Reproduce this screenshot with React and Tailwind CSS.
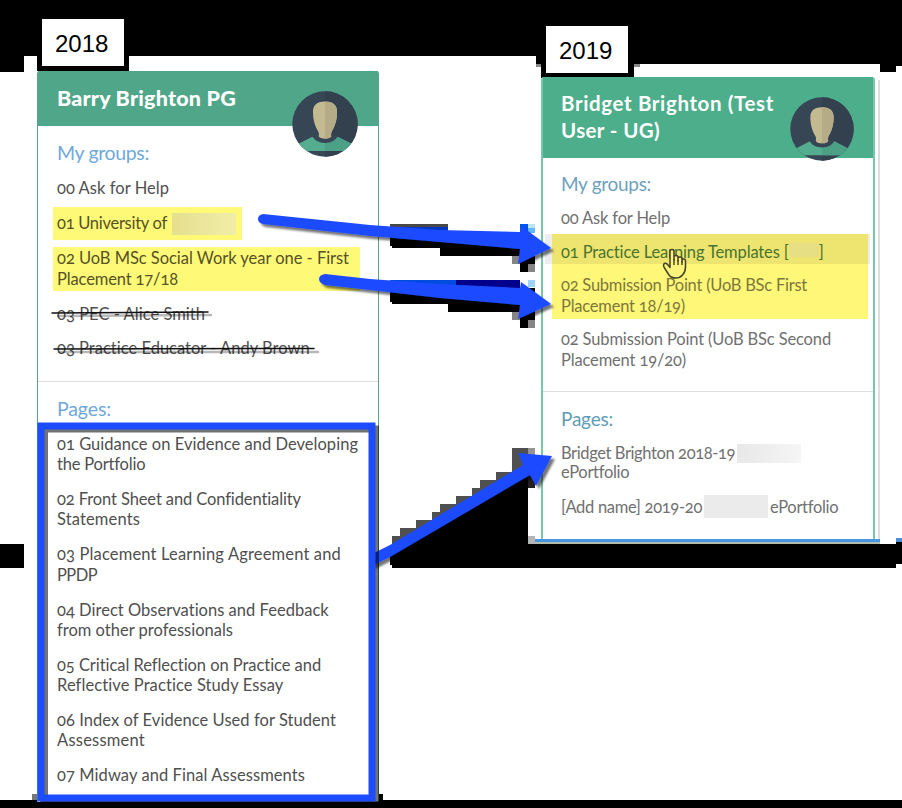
import { useLayoutEffect, useRef, useState } from "react";

/* One line of text, tracked so that it fills the given width. */
function Line({ children, w, className = "" }) {
  const ref = useRef(null);
  const [spacing, setSpacing] = useState(0);
  useLayoutEffect(() => {
    const natural = ref.current.getBoundingClientRect().width;
    setSpacing((w - natural) / String(children).length);
  }, []);
  return (
    <span className={`block whitespace-pre ${className}`}>
      <span ref={ref} style={{ letterSpacing: `${spacing}px` }}>
        {children}
      </span>
    </span>
  );
}

function YearLabel({ children, className = "" }) {
  return (
    <div
      className={`flex w-[92px] items-center border-[5px] border-black bg-white pl-[13px] pt-[3px] font-['Liberation_Sans',Arial,sans-serif] text-[24px] leading-none text-black ${className}`}
    >
      {children}
    </div>
  );
}

function Avatar({ id, className }) {
  return (
    <svg viewBox="0 0 66 66" className={className}>
      <clipPath id={id}>
        <circle cx="33" cy="33" r="32.7" />
      </clipPath>
      <g clipPath={`url(#${id})`}>
        <rect width="66" height="66" fill="#364655" />
        <rect x="33" width="33" height="66" fill="#33404e" />
        <path d="M2 60 L6 53 L20 46 H46 L60 53 L64 60 Z" fill="#55ad90" />
        <path d="M33 46 H46 L60 53 L64 60 H33Z" fill="#4ba085" />
        <path d="M20 45 Q24 52 33 52 Q42 52 46 45 Z" fill="#364655" />
        <path
          d="M33 10.500 C24 10.500 20.500 15 21 22 C21 30 24 37 26.500 41 Q27.500 44 26.500 45 Q28 47.800 33 47.800 Q38 47.800 39.500 45 Q38.500 44 39.500 41 C42 37 45 30 45 22 C45.500 15 42 10.500 33 10.500Z"
          fill="#c4ba92"
        />
        <path
          d="M33 10.500 V47.800 Q38 47.800 39.500 45 Q38.500 44 39.500 41 C42 37 45 30 45 22 C45.500 15 42 10.500 33 10.500Z"
          fill="#b5ab87"
        />
      </g>
    </svg>
  );
}

const pages2018 = [
  [["01 Guidance on Evidence and Developing", 301], ["the Portfolio", 88]],
  [["02 Front Sheet and Confidentiality", 244], ["Statements", 83]],
  [["03 Placement Learning Agreement and", 284], ["PPDP", 40]],
  [["04 Direct Observations and Feedback", 272], ["from other professionals", 176]],
  [["05 Critical Reflection on Practice and", 265], ["Reflective Practice Study Essay", 227]],
  [["06 Index of Evidence Used for Student", 279], ["Assessment", 88]],
  [["07 Midway and Final Assessments", 248]],
];

function Backdrop() {
  return (
    <svg className="absolute inset-0" width="902" height="808" shapeRendering="crispEdges">
      <path d="M0 0H902V66H896V72H880V64H634V78H542V64H536V56H24V72H0Z" />
      <path d="M536 64h5v3h-5zM634 64h6v3h-6z" fill="#888" />
      <path d="M0 544H24V568H0Z" />
      <path d="M32 794h8v14h-8z" fill="#777" />
      <path d="M0 800H902V808H0ZM375 794h8v8h-8z" />
      <path d="M390 553L528 474V544H896V542H902V564H896V568H392V565H390Z" />
      <path d="M896 538h6v4h-6z" fill="#4a8fd8" />
      <path d="M528 536h7v8h-7z" fill="#b5b5b5" />
      <path d="M878 80h2v463h-2z" fill="#ddd" />
    </svg>
  );
}

function Annotations() {
  return (
    <svg className="pointer-events-none absolute inset-0" width="902" height="808">
      <defs>
        <filter id="shade" x="-10%" y="-30%" width="120%" height="170%">
          <feDropShadow dx="3" dy="3" stdDeviation="1.2" floodColor="#000" floodOpacity="0.55" />
        </filter>
      </defs>
      <g shapeRendering="crispEdges">
        <path d="M535 538.500h345v3h-345z" fill="#4a95e0" />
        <path d="M535 541.500h345v2h-345z" fill="#b2bcae" />
        <path d="M390 224h58v3h-58z" fill="#484848" />
        <path d="M390 227h58v6h-58z" fill="#0037c0" />
        <path d="M448 232h72v6h-72z" fill="#0060ee" />
        <path d="M390 233H520V238H535V264H528V272H520V256H440V248H392V246H390Z" />
        <path d="M512 256h8v8h-8zM528 264h7v8h-7z" fill="#858585" />
        <path d="M520 224h8v8h-8z" fill="#0055ee" />
        <path d="M528 224h7v4h-7z" fill="#b9e3ff" />
        <path d="M528 228h7v5h-7z" fill="#62b7ff" />
        <path d="M390 280h66v8h-66z" fill="#004ce0" />
        <path d="M456 280h64v8h-64z" fill="#00008c" />
        <path d="M456 288h64v6h-64z" fill="#0060ee" />
        <path d="M390 290H520V288H535V320H528V328H520V312H448V304H392V302H390Z" />
        <path d="M512 312h8v8h-8zM528 320h7v8h-7z" fill="#858585" />
        <path d="M528 280h7v7h-7z" fill="#9bd4ff" />
        <path
          d="M392 545V536H400V528H416V520H432V512H440V504H456V496H472V488H480V480H496V472H512V448H528V475L392 553Z"
          fill="#505050"
        />
        <path d="M528 448h7v8h-7z" fill="#949494" />
        <path d="M528 470h7v18h-7z" fill="#252020" />
      </g>
      <g fill="#1d4cff" filter="url(#shade)">
        <path d="M263 214Q258 215 258 219Q258 223 263 224L370 236L440 242L520 249L518 264L551 248L521 226L520 232L440 230L370 225Z" />
        <path d="M325 274Q319 275 319 279Q319 283 325 285L370 290L440 298L520 305L518 319L551 304L521 282L520 288L440 284L370 279Z" />
        <path d="M372 554L390 545L523 465L518 453L552 456L536 486L530 475L390 557L372 566Z" />
      </g>
      <rect
        x="41"
        y="426"
        width="331"
        height="372"
        fill="none"
        stroke="#000"
        strokeOpacity="0.55"
        strokeWidth="7"
        transform="translate(3.5 3)"
      />
      <path d="M40 801.500h341v6.500h-341z" />
      <rect x="41" y="426" width="331" height="372" fill="none" stroke="#1d4cff" strokeWidth="7" />
      <g fill="none" strokeLinecap="round">
        <path d="M58 316L211 315M59 352L318 352" stroke="#000" strokeOpacity="0.28" strokeWidth="2.5" />
        <path d="M52 313L208 312M54 349L314 348.5" stroke="#111" strokeWidth="1.5" />
      </g>
      <path
        d="M670 264V251.500Q670 249.500 672 249.500Q674 249.500 674 251.500V260V257Q674 255.500 676 255.500Q678 255.500 678 257.500V261V258.500Q678 257 680 257Q682 257 682 259V262V260.500Q682 259 683.700 259Q685.500 259 685.500 261V267Q685.500 272 682.500 275Q680 278 676 278Q671 278 669 275L664.500 268Q662.500 264.500 664.500 263.500Q666.500 262.500 670 267.500Z"
        fill="#fbf37a"
        stroke="#45402a"
        strokeWidth="1.5"
        strokeLinejoin="round"
      />
      <path d="M674 259v6M678 260v5M682 261v4" stroke="#45402a" strokeWidth="1.400" />
    </svg>
  );
}

function Card2018() {
  return (
    <section className="flex w-[342px] flex-col">
      <YearLabel className="mt-[14px] h-[57px]">2018</YearLabel>
      <div className="h-[731px] rounded-t-[3px] border-x border-[#4fa688] bg-white text-[#4f4f4f]">
        <header className="relative h-[55px] bg-[#4fa688] pl-[19px] pt-[13px] text-[21.5px] font-black leading-[28px] text-white">
          <Line w={179}>Barry Brighton PG</Line>
          <Avatar id="avatar-2018" className="absolute left-[254px] top-[20px] size-[66px]" />
        </header>
        <div className="flex h-[256px] flex-col border-b border-[#dedede] pl-[19px] pt-[15px]">
          <h2 className="text-[19.5px] leading-[24px] text-[#6fa9da]">
            <Line w={92}>My groups:</Line>
          </h2>
          <Line w={112} className="mt-[13px]">00 Ask for Help</Line>
          <div className="-ml-[4px] mt-[9px] flex h-[33px] w-[189px] items-center bg-[#fff978] pl-[4px] text-[#555225]">
            <Line w={110} className="-mt-px">01 University of</Line>
            <span className="ml-[5px] h-[22px] w-[64px] bg-linear-to-r from-[#e5df8e] to-[#f1eda8]" />
          </div>
          <div className="-ml-[4px] mt-[7px] h-[44px] w-[307px] bg-[#fff978] pl-[4px] pt-px leading-[20.5px] text-[#555225]">
            <Line w={292}>02 UoB MSc Social Work year one - First</Line>
            <Line w={121}>Placement 17/18</Line>
          </div>
          <Line w={148} className="mt-[13px]">03 PEC - Alice Smith</Line>
          <Line w={253} className="mt-[14px]">03 Practice Educator - Andy Brown</Line>
        </div>
        <div className="flex flex-col pl-[19px] pt-[15px]">
          <h2 className="text-[19.5px] leading-[24px] text-[#6fa9da]">
            <Line w={54}>Pages:</Line>
          </h2>
          <ul className="mt-[13px] flex flex-col gap-[14.7px] leading-[20.25px]">
            {pages2018.map((item) => (
              <li key={item[0][0]}>
                {item.map(([text, w]) => (
                  <Line key={text} w={w}>{text}</Line>
                ))}
              </li>
            ))}
          </ul>
        </div>
      </div>
    </section>
  );
}

function Card2019() {
  return (
    <section className="flex w-[334px] flex-col">
      <YearLabel className="mt-[21px] h-[57px]">2019</YearLabel>
      <div className="-mt-px h-[466px] rounded-t-[3px] border-x-2 border-x-[#76c7aa] bg-white text-[#707070]">
        <header className="relative h-[81px] bg-[#4dae8b] pl-[18px] pt-[13px] text-[20.5px] font-bold leading-[27px] text-white">
          <Line w={213}>Bridget Brighton (Test</Line>
          <Line w={99}>User - UG)</Line>
          <Avatar id="avatar-2019" className="absolute left-[247px] top-[20px] size-[64px]" />
        </header>
        <div className="flex h-[234px] flex-col border-b border-[#dedede] pl-[18px] pt-[14px]">
          <h2 className="text-[19px] leading-[24px] text-[#6f9fbc]">
            <Line w={90}>My groups:</Line>
          </h2>
          <Line w={109} className="mt-[12px]">00 Ask for Help</Line>
          <div className="-ml-[9px] mt-[6px] h-[85px] w-[316px] bg-[#fff778] text-[#7d773d]">
            <div className="-ml-[7px] flex h-[30px] w-[325px] items-center bg-black/7 pl-[16px] pt-[6px] text-[#49742f]">
              <Line w={228}>01 Practice Learning Templates [</Line>
              <span className="mb-1 h-[14px] w-[30px] bg-[#e6df83]" />
              <Line w={5}>]</Line>
            </div>
            <div className="pl-[9px] pt-[11px] leading-[20.5px]">
              <Line w={246}>02 Submission Point (UoB BSc First</Line>
              <Line w={124}>Placement 18/19)</Line>
            </div>
          </div>
          <div className="mt-[10px] leading-[20.5px]">
            <Line w={270}>02 Submission Point (UoB BSc Second</Line>
            <Line w={125}>Placement 19/20)</Line>
          </div>
        </div>
        <div className="flex flex-col pl-[18px] pt-[15px]">
          <h2 className="text-[19px] leading-[24px] text-[#5f9cb5]">
            <Line w={52}>Pages:</Line>
          </h2>
          <div className="mt-[12px] flex h-[20px] items-center">
            <Line w={174}>Bridget Brighton 2018-19</Line>
            <span className="ml-[2px] h-[19px] w-[64px] bg-linear-to-r from-[#e8e8e8] to-[#f5f5f5]" />
          </div>
          <Line w={68} className="-mt-px">ePortfolio</Line>
          <div className="mt-[13px] flex h-[23px] items-center">
            <Line w={141}>[Add name] 2019-20</Line>
            <span className="mx-[2px] h-[23px] w-[64px] bg-[#ebebeb]" />
            <Line w={68}>ePortfolio</Line>
          </div>
        </div>
      </div>
    </section>
  );
}

export default function App() {
  return (
    <main className="relative h-[808px] w-[902px] overflow-hidden bg-white font-[Lato,'Open_Sans',sans-serif] text-[16.5px] leading-[20px] [font-variant-numeric:oldstyle-nums]">
      <Backdrop />
      <div className="relative flex items-start gap-[162px] pl-[37px]">
        <Card2018 />
        <Card2019 />
      </div>
      <Annotations />
    </main>
  );
}
